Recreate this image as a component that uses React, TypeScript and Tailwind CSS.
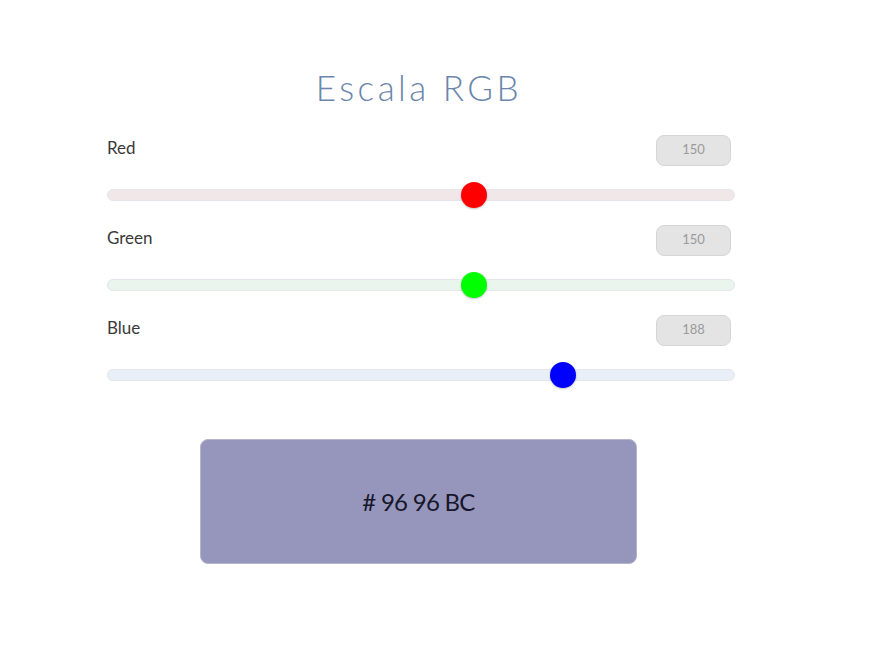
import React from 'react';

type Channel = {
    label: string;
    value: number;
    track: string;
    thumb: string;
};

const channels: Channel[] = [
    { label: 'Red', value: 150, track: 'bg-[#f1e7e9]', thumb: 'bg-[#ff0000]' },
    { label: 'Green', value: 150, track: 'bg-[#eaf5ee]', thumb: 'bg-[#00ff00]' },
    { label: 'Blue', value: 188, track: 'bg-[#e9eff7]', thumb: 'bg-[#0000ff]' },
];

const toHex = (n: number) => n.toString(16).toUpperCase().padStart(2, '0');

const Slider: React.FC<{ channel: Channel }> = ({ channel }) => {
    // thumb travels inside the track, 13px from each end
    const pct = channel.value / 255;
    return (
        <div className="flex flex-col">
            <div className="flex items-center justify-between h-[30px]">
                <span className="text-[17px] text-[#3a3a3a] -mt-[4px]">{channel.label}</span>
                <div className="w-[75px] h-[31px] mr-[4px] rounded-lg bg-[#e4e4e4] border border-[#d6d6d6] flex items-center justify-center text-[13px] text-[#9a9a9a]">
                    {channel.value}
                </div>
            </div>
            <div className={`relative mt-[24px] h-[12px] rounded-full border border-[#e3e6ea] ${channel.track}`}>
                <div
                    className={`absolute top-1/2 w-[26px] h-[26px] -translate-y-1/2 rounded-full shadow-[0_1px_2px_rgba(0,0,0,0.25)] ${channel.thumb}`}
                    style={{ left: `calc((100% - 26px) * ${pct})` }}
                />
            </div>
        </div>
    );
};

export default function App() {
    const [r, g, b] = channels.map(c => c.value);
    const hex = `# ${toHex(r)} ${toHex(g)} ${toHex(b)}`;

    return (
        <div className="w-[885px] h-[668px] bg-white font-['Lato',sans-serif]">
            <div className="w-[628px] ml-[107px] pt-[63px] flex flex-col">
                <h1 className="text-center text-[35px] font-light tracking-[0.1em] text-[#6a86aa] leading-[48px] ml-[-4px]">
                    Escala RGB
                </h1>
                <div className="flex flex-col gap-[24px] mt-[24px]">
                    {channels.map(c => (
                        <Slider key={c.label} channel={c} />
                    ))}
                </div>
                <div className="mt-[58px] ml-[93px] w-[437px] h-[125px] rounded-lg bg-[#9696bc] border border-[#b4b4cc] flex items-center justify-center">
                    <span className="text-[24px] text-[#16162a] tracking-[-0.03em]">{hex}</span>
                </div>
            </div>
        </div>
    );
}
